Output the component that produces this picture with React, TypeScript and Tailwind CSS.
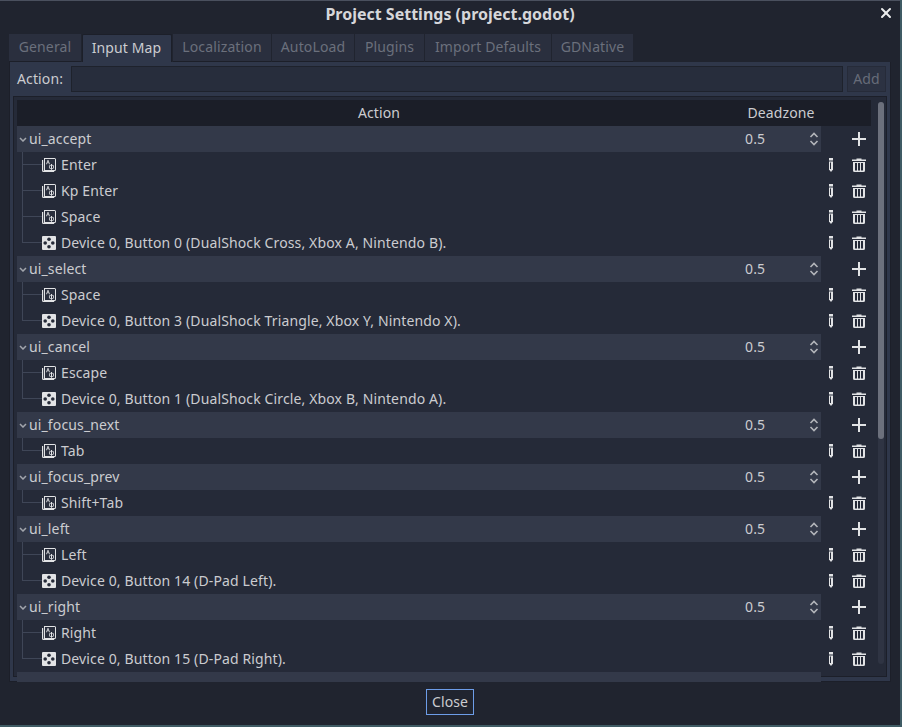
import { X } from "lucide-react";

type Binding = { kind: "key" | "pad"; label: string };
type Action = { name: string; bindings: Binding[] };

const tabs = [
  { label: "General", width: "w-[72px]" },
  { label: "Input Map", width: "w-[90px]", active: true },
  { label: "Localization", width: "w-[98px]" },
  { label: "AutoLoad", width: "w-[82px]" },
  { label: "Plugins", width: "w-[69px]" },
  { label: "Import Defaults", width: "w-[126px]" },
  { label: "GDNative", width: "w-[81px]" },
];

const actions: Action[] = [
  {
    name: "ui_accept",
    bindings: [
      { kind: "key", label: "Enter" },
      { kind: "key", label: "Kp Enter" },
      { kind: "key", label: "Space" },
      { kind: "pad", label: "Device 0, Button 0 (DualShock Cross, Xbox A, Nintendo B)." },
    ],
  },
  {
    name: "ui_select",
    bindings: [
      { kind: "key", label: "Space" },
      { kind: "pad", label: "Device 0, Button 3 (DualShock Triangle, Xbox Y, Nintendo X)." },
    ],
  },
  {
    name: "ui_cancel",
    bindings: [
      { kind: "key", label: "Escape" },
      { kind: "pad", label: "Device 0, Button 1 (DualShock Circle, Xbox B, Nintendo A)." },
    ],
  },
  { name: "ui_focus_next", bindings: [{ kind: "key", label: "Tab" }] },
  { name: "ui_focus_prev", bindings: [{ kind: "key", label: "Shift+Tab" }] },
  {
    name: "ui_left",
    bindings: [
      { kind: "key", label: "Left" },
      { kind: "pad", label: "Device 0, Button 14 (D-Pad Left)." },
    ],
  },
  {
    name: "ui_right",
    bindings: [
      { kind: "key", label: "Right" },
      { kind: "pad", label: "Device 0, Button 15 (D-Pad Right)." },
    ],
  },
];

function KeyIcon() {
  return (
    <svg width="14" height="14" viewBox="0 0 14 14" className="shrink-0">
      <path d="M0 2h1.2v10.8h11V14H1.5A1.5 1.5 0 0 1 0 12.5z" fill="#e2e3e5" />
      <path d="M2 0h10.5A1.5 1.5 0 0 1 14 1.5v10a1.5 1.5 0 0 1-1.5 1.5H2z" fill="#e2e3e5" />
      <rect x="3" y="1" width="10" height="11" fill="#2a2f3d" />
      <path d="M4 6.2 5.6 2h.8L8 6.2H7.1l-.3-.9H5.2l-.3.9zM5.5 4.5h1L6 3.2z" fill="#d6d7da" />
      <path d="M9 6h1v.8a2.1 2.1 0 0 1 0 4.2v.8H9V11a2.1 2.1 0 0 1 0-4.2zM9 7.6a1.3 1.3 0 0 0 0 2.6zM10 7.6v2.6a1.3 1.3 0 0 0 0-2.6z" fill="#e2e3e5" fillRule="evenodd" />
    </svg>
  );
}

function PadIcon() {
  return (
    <svg width="14" height="14" viewBox="0 0 14 14" className="shrink-0">
      <rect width="14" height="14" rx="1" fill="#e2e3e5" />
      <circle cx="7" cy="3.2" r="1.8" fill="#252a38" />
      <circle cx="3.2" cy="7" r="1.8" fill="#252a38" />
      <circle cx="10.8" cy="7" r="1.8" fill="#252a38" />
      <circle cx="7" cy="10.8" r="1.8" fill="#252a38" />
    </svg>
  );
}

function PencilIcon() {
  return (
    <svg width="4" height="14" viewBox="0 0 4 14" className="shrink-0">
      <rect x="0" y="0" width="4" height="2.5" fill="#e2e3e5" />
      <path d="M0 3.5h4v8L2 14l-2-2.5z" fill="#e2e3e5" />
      <rect x="1" y="4.5" width="1" height="6.5" fill="#252a38" />
    </svg>
  );
}

function TrashIcon() {
  return (
    <svg width="14" height="14" viewBox="0 0 14 14" className="shrink-0">
      <path d="M0 1.5h4.5V0.5h5v1H14V3H0z" fill="#e2e3e5" />
      <path d="M1 4h12V12.5a1.5 1.5 0 0 1-1.5 1.5h-9A1.5 1.5 0 0 1 1 12.5z" fill="#e2e3e5" />
      <rect x="3" y="5" width="2" height="7.5" fill="#252a38" />
      <rect x="6" y="5" width="2" height="7.5" fill="#252a38" />
      <rect x="9" y="5" width="2" height="7.5" fill="#252a38" />
    </svg>
  );
}

function PlusIcon() {
  return (
    <svg width="14" height="14" viewBox="0 0 14 14" className="shrink-0">
      <path d="M6 0h2v6h6v2H8v6H6V8H0V6h6z" fill="#e2e3e5" />
    </svg>
  );
}

function Chevron() {
  return (
    <svg width="8" height="5" viewBox="0 0 8 5" className="ml-[2px] mr-[2px] shrink-0">
      <path d="M1 1l3 3 3-3" fill="none" stroke="#a3a6ad" strokeWidth="1.5" />
    </svg>
  );
}

function SpinArrows() {
  return (
    <svg width="10" height="14" viewBox="0 0 10 14" className="shrink-0">
      <path d="M1.5 5 5 1.5 8.5 5M1.5 9 5 12.5 8.5 9" fill="none" stroke="#b3b5ba" strokeWidth="1.6" />
    </svg>
  );
}

function ActionRow({ name }: { name: string }) {
  return (
    <div className="flex h-[26px] items-center">
      <div className="flex h-full w-[804px] items-center bg-[#333949]">
        <Chevron />
        <span className="w-[716px]">{name}</span>
        <span className="w-[64px]">0.5</span>
        <SpinArrows />
      </div>
      <div className="ml-[31px]">
        <PlusIcon />
      </div>
    </div>
  );
}

function BindingRow({ binding, last }: { binding: Binding; last: boolean }) {
  return (
    <div className="relative flex h-[26px] items-center">
      {last ? null : <div className="absolute left-[5px] top-0 h-full w-px bg-[#3f4657]" />}
      <div className="ml-[5px] h-[13px] w-[20px] self-start border-b border-l border-[#3f4657]" />
      {binding.kind === "key" ? <KeyIcon /> : <PadIcon />}
      <span className="ml-[5px] w-[768px] whitespace-nowrap">{binding.label}</span>
      <PencilIcon />
      <div className="ml-[19px]">
        <TrashIcon />
      </div>
    </div>
  );
}

export default function App() {
  return (
    <div
      className="h-[727px] w-[902px] overflow-hidden bg-[#3f5b64] text-[14px] leading-[20px] tracking-[0.13px] text-[#cbccd0]"
      style={{ fontFamily: '"Noto Sans", sans-serif' }}
    >
      <div className="h-[725px] w-[900px] border-t border-[#4a505e] bg-[#20242f]">
        <div className="relative flex h-[26px] items-center justify-center">
          <span className="text-[16px] font-bold tracking-normal text-[#d6d7da]">Project Settings (project.godot)</span>
          <X className="absolute right-[6px] top-[4px] h-[16px] w-[16px] text-[#eceded]" strokeWidth={3} />
        </div>

        <div className="ml-[9px] mt-[7px] flex h-[28px] gap-px">
          {tabs.map((tab) =>
            tab.active ? (
              <div
                key={tab.label}
                className={`${tab.width} z-10 flex h-[28px] items-center justify-center rounded-t-[2px] border-x border-t border-[#1c1f29] bg-[#2f374a] pb-[2px] pr-[1px] text-[#cbccd0]`}
              >
                {tab.label}
              </div>
            ) : (
              <div
                key={tab.label}
                className={`${tab.width} flex h-[28px] items-center justify-center border-b border-[#1c1f29] bg-[#2a2f3e] pb-[2px] text-[#6b707c]`}
              >
                {tab.label}
              </div>
            ),
          )}
        </div>

        <div className="ml-[9px] flex h-[620px] w-[882px] flex-col border border-t-0 border-[#1c1f29] bg-[#2f374a] px-[3px] pb-[4px] pt-[4px]">
          <div className="flex h-[27px] items-center gap-[4px] pr-[1px]">
            <span className="ml-[4px] w-[50px]">Action:</span>
            <div className="h-[26px] w-[773px] border border-[#1e222c] bg-[#272d3c]" />
            <div className="flex h-[26px] w-[39px] items-center justify-center border border-[#262b39] bg-[#2c3242] text-[#676c79]">
              Add
            </div>
          </div>

          <div className="mt-[4px] flex h-[581px] w-[874px] border border-[#1c1f29] bg-[#252a38] pl-[3px] pt-[3px]">
            <div className="flex w-[854px] flex-col">
              <div className="flex h-[26px] shrink-0 items-center bg-[#1b1e28]">
                <span className="w-[724px] text-center">Action</span>
                <span className="w-[80px] text-center">Deadzone</span>
              </div>
              {actions.map((action) => (
                <div key={action.name}>
                  <ActionRow name={action.name} />
                  {action.bindings.map((binding, i) => (
                    <BindingRow
                      key={binding.label}
                      binding={binding}
                      last={i === action.bindings.length - 1}
                    />
                  ))}
                </div>
              ))}
              <div className="h-[10px] w-[804px] shrink-0 bg-[#333949]" />
            </div>
            <div className="ml-[7px] mt-[2px] h-[562px] w-[6px] rounded-[3px] bg-[#2f3443]">
              <div className="h-[337px] w-full rounded-[3px] bg-[#6c707c]" />
            </div>
          </div>
        </div>

        <div className="mt-[7px] flex justify-center">
          <div className="flex h-[26px] w-[48px] items-center justify-center border border-[#6d9de8]">
            Close
          </div>
        </div>
      </div>
    </div>
  );
}
